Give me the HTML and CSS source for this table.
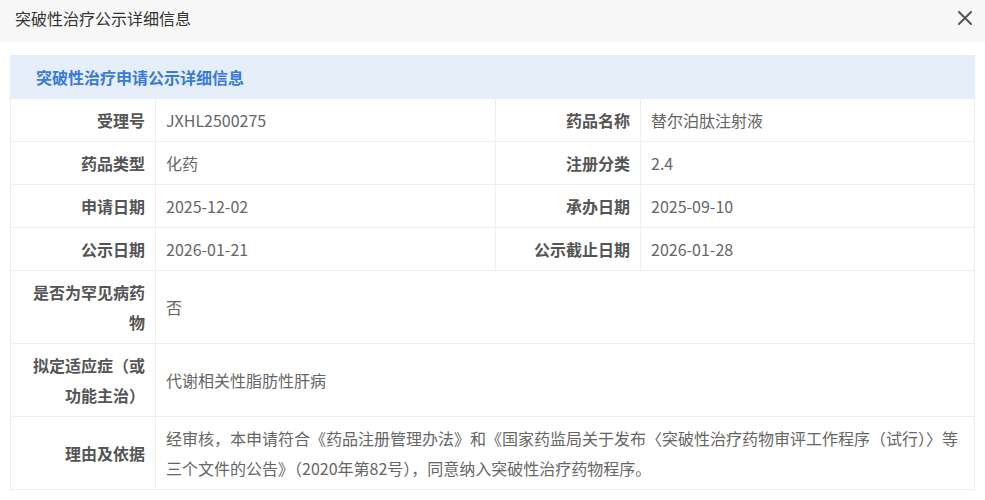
FILE: index.html
```html
<!DOCTYPE html>
<html lang="zh-CN">
<head>
<meta charset="utf-8">
<title>突破性治疗公示详细信息</title>
<link rel="stylesheet" href="styles.css">
</head>
<body>
<div class="dialog">
  <div class="dialog-header">
    <span class="dialog-title">突破性治疗公示详细信息</span>
    <button class="close" aria-label="关闭">
      <svg width="14" height="14" viewBox="0 0 14 14"><path d="M1 1L13 13M13 1L1 13" stroke="#555" stroke-width="2" stroke-linecap="round" fill="none"/></svg>
    </button>
  </div>
  <div class="dialog-body">
    <table class="info">
      <colgroup>
        <col class="c-label"><col class="c-val1"><col class="c-label"><col>
      </colgroup>
      <thead>
        <tr><th colspan="4" class="caption">突破性治疗申请公示详细信息</th></tr>
      </thead>
      <tbody>
        <tr><th>受理号</th><td>JXHL2500275</td><th>药品名称</th><td>替尔泊肽注射液</td></tr>
        <tr><th>药品类型</th><td>化药</td><th>注册分类</th><td>2.4</td></tr>
        <tr><th>申请日期</th><td>2025-12-02</td><th>承办日期</th><td>2025-09-10</td></tr>
        <tr><th>公示日期</th><td>2026-01-21</td><th>公示截止日期</th><td>2026-01-28</td></tr>
        <tr><th>是否为罕见病药物</th><td colspan="3">否</td></tr>
        <tr><th>拟定适应症（或功能主治）</th><td colspan="3">代谢相关性脂肪性肝病</td></tr>
        <tr><th>理由及依据</th><td colspan="3" class="long">经审核，本申请符合《药品注册管理办法》和《国家药监局关于发布〈突破性治疗药物审评工作程序（试行）〉等<br>三个文件的公告》（2020年第82号），同意纳入突破性治疗药物程序。</td></tr>
      </tbody>
    </table>
  </div>
</div>
</body>
</html>
```

FILE: styles.css
```css
html, body {
  margin: 0;
  padding: 0;
  background: #ffffff;
}
body {
  font-family: "Noto Sans CJK SC", "Noto Sans", sans-serif;
  font-size: 16px;
  color: #333;
}
.dialog {
  width: 985px;
}
.dialog-header {
  height: 42px;
  background: #f7f7f7;
  display: flex;
  align-items: center;
  justify-content: space-between;
  padding: 0 13px 0 15px;
  box-sizing: border-box;
}
.dialog-title {
  font-size: 16px;
  color: #333;
  line-height: 20px;
  margin-top: -6px;
}
.close {
  border: 0;
  background: transparent;
  padding: 0;
  width: 14px;
  height: 14px;
  display: flex;
  margin-top: -6px;
}
.dialog-body {
  padding: 13px 10px 0 10px;
}
.info {
  width: 965px;
  border-collapse: collapse;
  table-layout: fixed;
  border: 1px solid #eeeeee;
}
.c-label { width: 145px; }
.c-val1 { width: 340px; }
.info th,
.info td {
  border: 1px solid #eeeeee;
  line-height: 30px;
  padding: 6px 10px;
  vertical-align: middle;
  font-size: 16px;
}
.info th {
  text-align: right;
  font-weight: bold;
  color: #555;
  padding-left: 20px;
}
.info td {
  color: #666;
  text-align: left;
  padding-left: 10px;
  padding-right: 4px;
}
.info .caption {
  background: #e6eef9;
  color: #3a7ad8;
  text-align: left;
  padding-left: 25px;
  font-weight: bold;
  border-color: #e6eef9;
}
.info td.long {
  white-space: nowrap;
}
```
